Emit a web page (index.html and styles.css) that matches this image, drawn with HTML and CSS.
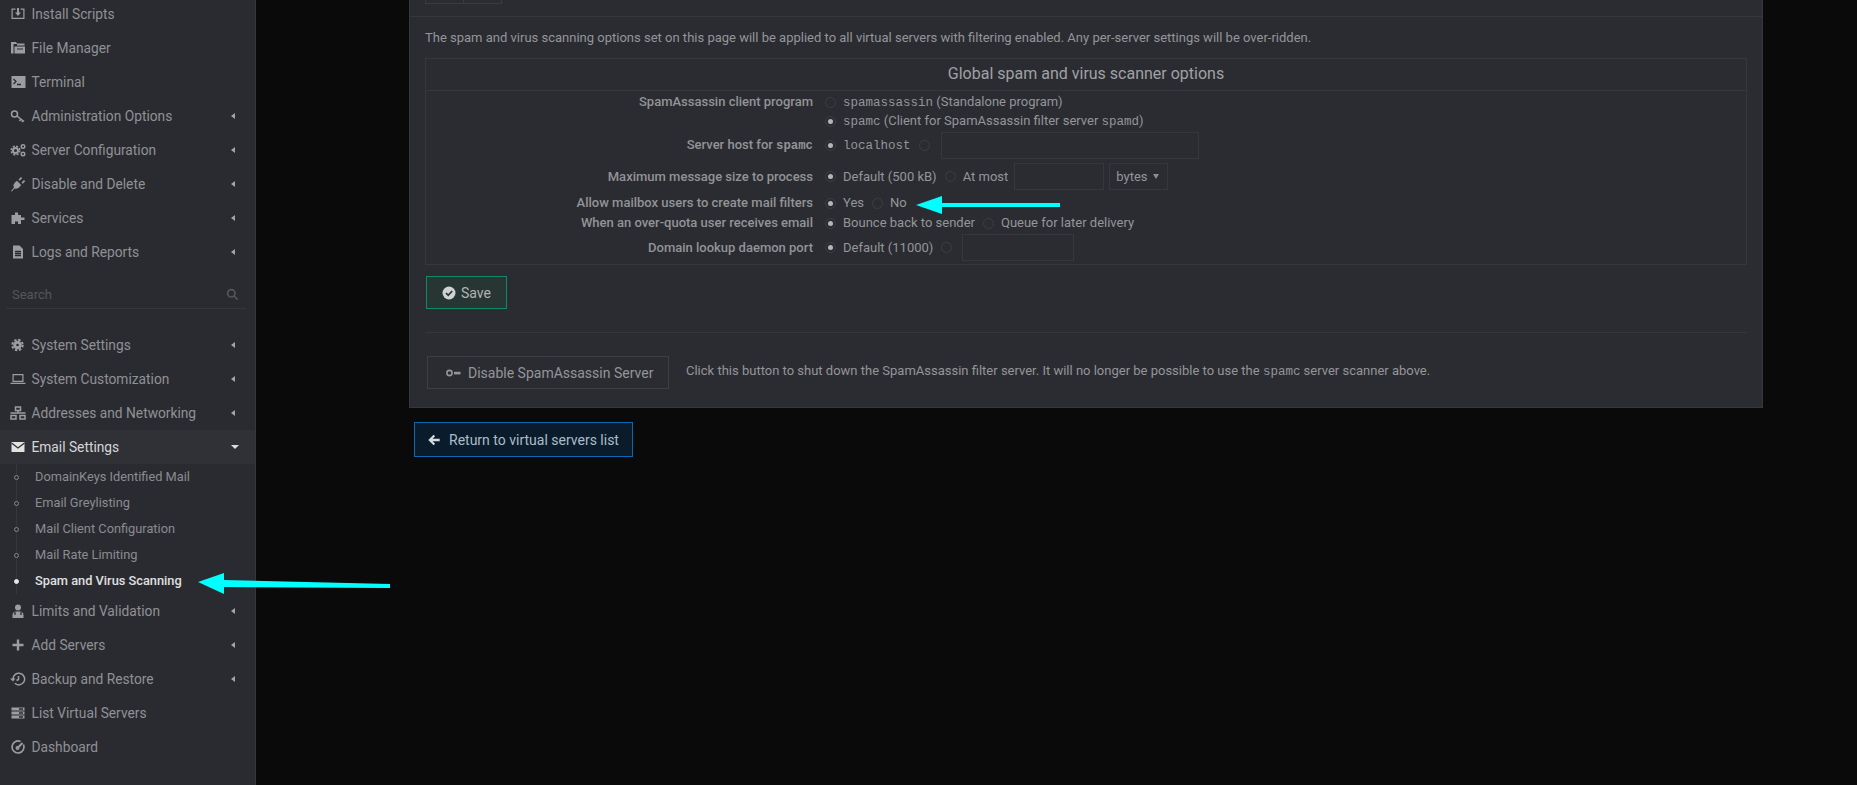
FILE: index.html
```html
<!DOCTYPE html>
<html lang="en">
<head>
    <meta charset="UTF-8">
    <meta name="viewport" content="width=device-width, initial-scale=1.0">
    <title>Spam and Virus Scanning</title>
    <link rel="stylesheet" href="styles.css">
</head>
<body>
    <aside class="sidebar">
        <ul class="menu">
            <li class="item"><svg class="icon" viewBox="0 0 16 16"><path d="M1.500 2.500h4v1.200H2.700v8.100h10.600V3.700h-2.800V2.500h4v10.500h-13zM7 2h2v4.500h2L8 10 5 6.500h2z"/></svg>Install Scripts</li>
            <li class="item"><svg class="icon" viewBox="0 0 16 16"><path d="M1 2h5l1 1.500h7.500v2H7V4H3.500v9.500H1zM4.500 6.500H15v7H4.500zM7 8.500v1h6v-1z" fill-rule="evenodd"/></svg>File Manager</li>
            <li class="item"><svg class="icon" viewBox="0 0 16 16"><rect x="1.500" y="2" width="14" height="12"/><path class="cut" d="M3.500 5l2.500 2.500L3.500 10M7 10.500h4" fill="none"/></svg>Terminal</li>
            <li class="item more"><svg class="icon line" viewBox="0 0 16 16"><circle cx="4.500" cy="6" r="3"/><path d="M7 8l7 5.500M11 11l-1.500 2M13 12.500l-1 1.500"/></svg>Administration Options</li>
            <li class="item more"><svg class="icon line" viewBox="0 0 16 16"><circle cx="5.500" cy="8.500" r="2.500" stroke-width="2"/><circle cx="5.500" cy="8.500" r="4.300" stroke-width="1.500" stroke-dasharray="2 1.400"/><circle cx="13" cy="4.500" r="1.800" stroke-width="1.400"/><circle cx="13" cy="12" r="1.800" stroke-width="1.400"/></svg>Server Configuration</li>
            <li class="item more"><svg class="icon" viewBox="0 0 16 16"><path d="M1 15l3-3.500C3 9.500 3.500 8 5 6.500L7 4.800l4.200 4.200-1.700 2c-1.500 1.500-3 2-5 1.400L1.800 15.600zM8.500 3.500L11 1l1.200 1.200-2.500 2.500zM11.500 6.500L14 4l1.200 1.200-2.500 2.500z"/></svg>Disable and Delete</li>
            <li class="item more"><svg class="icon" viewBox="0 0 16 16"><path d="M1.500 5H5V2.500h3V5h3v2.500h3.500V10H11v4H8v-2.500H5V14H1.500z"/></svg>Services</li>
            <li class="item more"><svg class="icon" viewBox="0 0 16 16"><path d="M3 1.500h6.500L13 5v9.500H3z"/><path class="cut" d="M5 7.500h6M5 9.500h6M5 11.500h6" fill="none"/></svg>Logs and Reports</li>
        </ul>

        <div class="search">
            <span>Search</span>
            <svg class="search-icon" viewBox="0 0 16 16"><circle cx="6.500" cy="6.500" r="4.500"/><path d="M10 10l4.500 4.500"/></svg>
        </div>

        <ul class="menu">
            <li class="item more"><svg class="icon line" viewBox="0 0 16 16"><circle cx="7.500" cy="8" r="2.800" stroke-width="3"/><circle cx="7.500" cy="8" r="5.200" stroke-width="2" stroke-dasharray="2.400 1.700"/></svg>System Settings</li>
            <li class="item more"><svg class="icon" viewBox="0 0 16 16"><path d="M2.500 3h11v8h-11zM3.700 4.200v5.600h8.600V4.200zM0.500 11.800h15V13h-15z" fill-rule="evenodd"/></svg>System Customization</li>
            <li class="item more"><svg class="icon line" viewBox="0 0 16 16"><rect x="5.500" y="2" width="5" height="3.500"/><rect x="1" y="10.500" width="5" height="3.500"/><rect x="10" y="10.500" width="5" height="3.500"/><path d="M8 5.500v2.500M0.500 8h15"/></svg>Addresses and Networking</li>
            <li class="item active more-open"><svg class="icon" viewBox="0 0 16 16"><rect x="1.500" y="3" width="13" height="10"/><path class="cut" d="M1.500 4l6.500 5 6.500-5" fill="none"/></svg>Email Settings</li>
            <li>
                <ul class="submenu">
                    <li>DomainKeys Identified Mail</li>
                    <li>Email Greylisting</li>
                    <li>Mail Client Configuration</li>
                    <li>Mail Rate Limiting</li>
                    <li class="current">Spam and Virus Scanning</li>
                </ul>
            </li>
            <li class="item more"><svg class="icon" viewBox="0 0 16 16"><circle cx="8" cy="4.500" r="3"/><path d="M2.500 15v-3c0-2.500 2-3.500 3.500-3.500h4c1.500 0 3.500 1 3.500 3.500v3z"/><path class="cut" d="M5 9v3M11 9v3" fill="none"/></svg>Limits and Validation</li>
            <li class="item more"><svg class="icon" viewBox="0 0 16 16"><path d="M6.800 2.500h2.400v4.300h4.300v2.400H9.200v4.300H6.800V9.200H2.500V6.800h4.300z"/></svg>Add Servers</li>
            <li class="item more"><svg class="icon line" viewBox="0 0 16 16"><path d="M3 8a5.800 5.800 0 1 1 1.800 4.300"/><path d="M8.500 5v3.500l-2 1"/><path class="solid" d="M0 7.500h5.500L3 10.500z"/></svg>Backup and Restore</li>
            <li class="item"><svg class="icon" viewBox="0 0 16 16"><path d="M1.500 2.500h13v3h-13zM1.500 6.500h13v3h-13zM1.500 10.500h13v3h-13z"/><path class="cut" d="M9 4h4M9 8h4M9 12h4" fill="none"/></svg>List Virtual Servers</li>
            <li class="item"><svg class="icon line" viewBox="0 0 16 16"><path d="M13.500 5.500A6 6 0 1 1 10.500 2.500" stroke-width="1.700"/><path d="M7.500 9L12.500 4" stroke-width="2"/><circle cx="7.500" cy="9" r="1.200"/></svg>Dashboard</li>
        </ul>
    </aside>

    <main class="content">
        <section class="panel">
            <div class="btn-group"><span></span><span></span></div>
            <div class="panel-body">
                <p class="intro">The spam and virus scanning options set on this page will be applied to all virtual servers with filtering enabled. Any per-server settings will be over-ridden.</p>

                <div class="options">
                    <h2>Global spam and virus scanner options</h2>

                    <div class="row row-top">
                        <div class="label">SpamAssassin client program</div>
                        <div class="stack">
                            <div class="field"><i class="radio"></i><span><code>spamassassin</code> (Standalone program)</span></div>
                            <div class="field"><i class="radio on"></i><span><code>spamc</code> (Client for SpamAssassin filter server <code>spamd</code>)</span></div>
                        </div>
                    </div>
                    <div class="row row-host">
                        <div class="label">Server host for <code>spamc</code></div>
                        <div class="field"><i class="radio on"></i><code>localhost</code><i class="radio"></i><div class="input input-host"></div></div>
                    </div>
                    <div class="row row-size">
                        <div class="label">Maximum message size to process</div>
                        <div class="field"><i class="radio on"></i><span>Default (500 kB)</span><i class="radio"></i><span>At most</span><div class="input input-size"></div><div class="select"><span>bytes</span><span class="caret"></span></div></div>
                    </div>
                    <div class="row row-plain">
                        <div class="label">Allow mailbox users to create mail filters</div>
                        <div class="field"><i class="radio on"></i><span>Yes</span><i class="radio"></i><span>No</span></div>
                    </div>
                    <div class="row row-plain">
                        <div class="label">When an over-quota user receives email</div>
                        <div class="field"><i class="radio on"></i><span>Bounce back to sender</span><i class="radio"></i><span>Queue for later delivery</span></div>
                    </div>
                    <div class="row row-port">
                        <div class="label">Domain lookup daemon port</div>
                        <div class="field"><i class="radio on"></i><span>Default (11000)</span><i class="radio"></i><div class="input input-port"></div></div>
                    </div>
                </div>

                <button class="btn btn-save"><svg viewBox="0 0 16 16"><circle cx="8" cy="8" r="6.500"/><path class="cut" d="M5 8l2.200 2.300L11.200 6" fill="none"/></svg>Save</button>

                <hr class="divider">

                <div class="action">
                    <button class="btn btn-plain"><svg viewBox="0 0 16 16"><circle cx="4.500" cy="8" r="2.600" fill="none" stroke="currentColor" stroke-width="1.600"/><rect x="9" y="6.800" width="6.500" height="2.600"/></svg>Disable SpamAssassin Server</button>
                    <p>Click this button to shut down the SpamAssassin filter server. It will no longer be possible to use the <code>spamc</code> server scanner above.</p>
                </div>
            </div>
        </section>

        <button class="btn btn-return"><svg viewBox="0 0 16 16"><path d="M7.500 2L1.500 8l6 6 1.800-1.800-2.900-2.900h8.100V6.700H6.400l2.900-2.900z"/></svg>Return to virtual servers list</button>
    </main>

    <!-- annotation arrows drawn over the screenshot -->
    <svg class="arrows" viewBox="0 0 1857 785">
        <path d="M198 582l26-9v7l166 4v4l-166-1v7z"/>
        <path d="M916 205l26-9v7h118v4H942v7z"/>
    </svg>
</body>
</html>
```

FILE: styles.css
```css
html, body {
    height: 100%;
}

body {
    margin: 0;
    display: flex;
    overflow: hidden;
    background-color: #0a0a0a;
    color: #949599;
    font-family: Roboto, "Liberation Sans", sans-serif;
    font-size: 13px;
}

ul {
    list-style: none;
    margin: 0;
    padding: 0;
}

code {
    font-family: "Liberation Mono", monospace;
    font-size: 12.5px;
}

/* sidebar */
.sidebar {
    flex: 0 0 255px;
    border-right: 1px solid #36373b;
    background-color: #2a2b30;
    margin-top: -3px;
}

.item {
    position: relative;
    display: flex;
    align-items: center;
    height: 34px;
    padding-left: 10px;
    font-size: 13.76px;
    color: #909195;
}

.icon {
    width: 16px;
    height: 16px;
    margin-right: 5.500px;
    flex: none;
    fill: #9c9da0;
}

.icon.line {
    fill: none;
    stroke: #9c9da0;
    stroke-width: 1.500;
}

.icon .solid {
    fill: #9c9da0;
    stroke: none;
}

.cut {
    stroke: #2a2b30;
    stroke-width: 1.300;
}

.more::after {
    content: "";
    position: absolute;
    left: 231px;
    top: 14px;
    border-top: 3px solid transparent;
    border-bottom: 3px solid transparent;
    border-right: 4px solid #a4a5a8;
}

.active {
    background-color: #303136;
    color: #d6d6d7;
}

.active .icon {
    fill: #e2e2e2;
}

.active .cut {
    stroke: #303136;
}

.more-open::after {
    content: "";
    position: absolute;
    left: 231px;
    top: 15px;
    border-left: 4px solid transparent;
    border-right: 4px solid transparent;
    border-top: 4px solid #dcdcdd;
}

.search {
    display: flex;
    justify-content: space-between;
    align-items: center;
    height: 28px;
    margin: 11px 9px 19px 6px;
    padding: 0 6px;
    border-bottom: 1px solid #36373b;
    color: #55565a;
}

.search-icon {
    width: 13px;
    height: 13px;
    margin-right: 1px;
    fill: none;
    stroke: #55565a;
    stroke-width: 2;
}

.submenu {
    position: relative;
    margin-left: 16px;
    border-left: 1px solid #36373b;
}

.submenu li {
    position: relative;
    height: 26px;
    line-height: 26px;
    padding-left: 18px;
    font-size: 12.8px;
    color: #8b8c90;
}

.submenu li::before {
    content: "";
    position: absolute;
    left: -3px;
    top: 11px;
    width: 3px;
    height: 3px;
    border: 1px solid #85868a;
    border-radius: 50%;
    background-color: #2a2b30;
}

.submenu .current {
    color: #e0e0e0;
    font-weight: 500;
}

.submenu .current::before {
    background-color: #e6e6e6;
    border-color: #e6e6e6;
}

/* main column */
.content {
    flex: 1;
    padding-left: 153px;
}

.panel {
    width: 1352px;
    margin-top: -20px;
    border: 1px solid #36373b;
    background-color: #2b2c31;
}

.btn-group {
    display: flex;
    height: 22px;
    padding-bottom: 13px;
    padding-left: 15px;
    border-bottom: 1px solid #36373b;
}

.btn-group span {
    width: 37px;
    border: 1px solid #3a3b40;
    margin-right: -1px;
    height: 21px;
}

.panel-body {
    padding: 0 15px;
}

.intro {
    margin: 0;
    padding: 11px 0 10px;
    line-height: 20px;
}

.options {
    border: 1px solid #36373b;
    padding-bottom: 3px;
}

.options h2 {
    margin: 0 0 1px;
    padding: 0;
    height: 31px;
    line-height: 29px;
    border-bottom: 1px solid #36373b;
    text-align: center;
    font-size: 16px;
    font-weight: 400;
    color: #a0a1a4;
}

.row {
    display: grid;
    grid-template-columns: 387px 1fr;
    column-gap: 12px;
    align-items: center;
}

.row-top {
    align-items: start;
    height: 40px;
}

.row-host {
    height: 27px;
}

.row-size {
    height: 27px;
    margin-top: 4px;
}

.row-plain {
    height: 20px;
}

.row-size + .row-plain {
    margin-top: 3px;
}

.row-port {
    height: 27px;
    margin-top: 1px;
}

.label {
    text-align: right;
    font-weight: 500;
    line-height: 20px;
    color: #929397;
}

.label code {
    font-weight: 700;
    font-size: 12.3px;
}

.stack .field {
    height: 19.500px;
}

.stack .field:first-child {
    height: 18.500px;
    padding-top: 1px;
}

.field {
    display: flex;
    align-items: center;
    gap: 7px;
    line-height: 20px;
}

.radio {
    flex: none;
    position: relative;
    box-sizing: border-box;
    width: 11px;
    height: 11px;
    border: 1px solid #3d3e43;
    border-radius: 50%;
}

.radio:not(:first-child) {
    margin-left: 1px;
}

.radio.on::after {
    content: "";
    position: absolute;
    left: 2px;
    top: 2px;
    width: 5px;
    height: 5px;
    border-radius: 50%;
    background-color: #b4b5b8;
}

.input, .select {
    box-sizing: border-box;
    height: 27px;
    border: 1px solid #36373b;
}

.input-host {
    width: 258px;
    margin-left: 4px;
}

.input-size {
    width: 90px;
    margin-left: -1px;
}

.input-port {
    width: 112px;
    margin-left: 3px;
}

.select {
    display: flex;
    align-items: center;
    justify-content: space-between;
    width: 59px;
    margin-left: -2px;
    padding: 0 8px 0 6px;
}

.caret {
    border-left: 3px solid transparent;
    border-right: 3px solid transparent;
    border-top: 5px solid #8c8d91;
}

/* buttons */
.btn {
    display: inline-flex;
    align-items: center;
    box-sizing: border-box;
    padding: 0;
    font-family: inherit;
    font-size: 14px;
    background: none;
}

.btn svg {
    width: 16px;
    height: 16px;
    flex: none;
    fill: currentColor;
}

.btn-save {
    display: flex;
    width: 81px;
    height: 33px;
    margin: 11px 0 0 1px;
    padding-left: 14px;
    gap: 4px;
    border: 1px solid #0d8a68;
    background-color: #283633;
    color: #b0b4b3;
}

.btn-save svg {
    color: #cfd2d2;
}

.btn-save .cut {
    stroke: #283633;
    stroke-width: 1.800;
}

.divider {
    margin: 23px 0;
    border: 0;
    border-top: 1px solid #36373b;
}

.action {
    display: flex;
    align-items: center;
    height: 33px;
    margin-bottom: 18px;
    margin-left: 2px;
}

.action p {
    margin: -3px 0 0 17px;
}

.btn-plain {
    width: 242px;
    height: 33px;
    padding-left: 17px;
    gap: 7px;
    border: 1px solid #3e3f44;
    color: #949599;
}

.btn-return {
    width: 219px;
    height: 35px;
    margin: 14px 0 0 5px;
    padding-left: 12px;
    gap: 8px;
    border: 1px solid #0d66b0;
    background-color: #0a1c2c;
    color: #adbbc8;
}

.btn-return svg {
    width: 14px;
    height: 14px;
    color: #d4dbe2;
}

/* annotation layer */
.arrows {
    position: absolute;
    left: 0;
    top: 0;
    width: 1857px;
    height: 785px;
    fill: #00ffff;
    pointer-events: none;
}
```
